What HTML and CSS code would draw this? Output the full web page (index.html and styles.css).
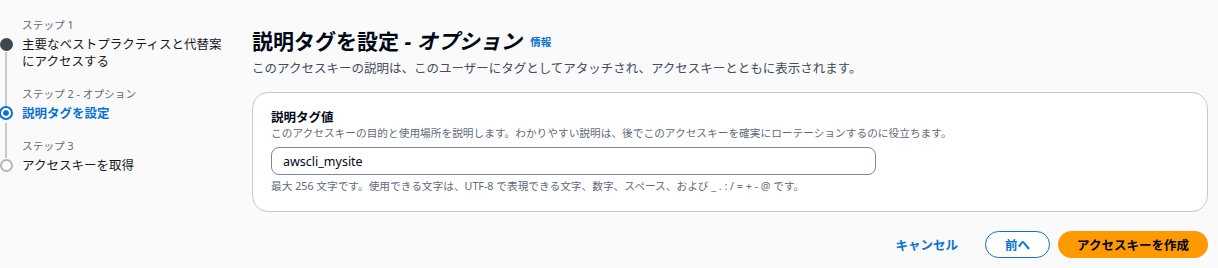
FILE: index.html
```html
<!DOCTYPE html>
<html lang="ja">
<head>
    <meta charset="UTF-8">
    <meta name="viewport" content="width=device-width, initial-scale=1.0">
    <title>説明タグを設定</title>
    <link rel="stylesheet" href="styles.css">
</head>
<body>
    <div class="wizard">
        <nav class="steps">
            <div class="step done">
                <div class="step-label">ステップ 1</div>
                <div class="step-title">主要なベストプラクティスと代替案にアクセスする</div>
            </div>
            <div class="step current">
                <div class="step-label">ステップ 2 - オプション</div>
                <div class="step-title">説明タグを設定</div>
            </div>
            <div class="step">
                <div class="step-label">ステップ 3</div>
                <div class="step-title">アクセスキーを取得</div>
            </div>
        </nav>

        <main class="content">
            <h1 class="page-title">説明タグを設定 <em>- オプション</em> <a href="#" class="info-link">情報</a></h1>
            <p class="page-desc">このアクセスキーの説明は、このユーザーにタグとしてアタッチされ、アクセスキーとともに表示されます。</p>

            <div class="card">
                <label class="field-label" for="tagValue">説明タグ値</label>
                <div class="field-desc">このアクセスキーの目的と使用場所を説明します。わかりやすい説明は、後でこのアクセスキーを確実にローテーションするのに役立ちます。</div>
                <input type="text" id="tagValue" class="field-input" value="awscli_mysite">
                <div class="field-hint">最大 256 文字です。使用できる文字は、UTF-8 で表現できる文字、数字、スペース、および _ . : / = + - @ です。</div>
            </div>

            <div class="actions">
                <button class="btn btn-link">キャンセル</button>
                <button class="btn btn-normal">前へ</button>
                <button class="btn btn-primary">アクセスキーを作成</button>
            </div>
        </main>
    </div>
</body>
</html>
```

FILE: styles.css
```css
body {
    margin: 0;
    background-color: #fafafa;
    color: #000716;
    font-family: "Noto Sans", "Noto Sans CJK JP", sans-serif;
    font-size: 12.5px;
}
.wizard {
    display: flex;
}
.steps {
    width: 252px;
    flex-shrink: 0;
    padding-top: 17px;
}
.step {
    position: relative;
    padding-left: 22px;
    padding-right: 20px;
    margin-bottom: 16px;
}
.step::before {
    content: "";
    position: absolute;
    left: 0;
    top: 21px;
    width: 9px;
    height: 9px;
    border: 2px solid #b4b4bb;
    border-radius: 50%;
    background-color: #fff;
}
.step:not(:last-child)::after {
    content: "";
    position: absolute;
    left: 5px;
    top: 35px;
    bottom: -36px;
    width: 2px;
    background-color: #c6c6cd;
}
.step.done::before {
    width: 13px;
    height: 13px;
    border: none;
    background-color: #414750;
}
.step.current::before {
    left: -1px;
    top: 20px;
    width: 6px;
    height: 6px;
    border: 2px solid #0972d3;
    background-color: #0972d3;
    box-shadow: inset 0 0 0 2px #fff;
    padding: 2px;
    background-clip: content-box;
}
.step.current::after {
    top: 37px;
}
.step-label {
    font-size: 10.7px;
    line-height: 16px;
    color: #5f6b7a;
}
.step-title {
    margin-top: 3px;
    line-height: 17px;
    color: #16191f;
}
.step.current .step-title {
    color: #0972d3;
    font-weight: bold;
}
.content {
    flex: 1;
    padding: 28px 10px 0 0;
}
.page-title {
    margin: 0;
    font-size: 21px;
    line-height: 26px;
    font-weight: bold;
}
.page-title em {
    font-style: italic;
}
.info-link {
    margin-left: 3px;
    font-size: 10.5px;
    color: #0972d3;
    text-decoration: none;
    vertical-align: 3px;
}
.page-desc {
    margin: 5px 0 0;
    line-height: 17px;
    color: #414d5c;
}
.card {
    margin-top: 15px;
    padding: 16px 18px 17px;
    background-color: #fff;
    border: 1px solid #c6c6cd;
    border-radius: 16px;
}
.field-label {
    display: block;
    font-weight: bold;
    line-height: 17px;
}
.field-desc,
.field-hint {
    font-size: 10.7px;
    line-height: 15px;
    color: #5f6b7a;
}
.field-input {
    display: block;
    box-sizing: border-box;
    width: 605px;
    height: 28px;
    margin: 6px 0 4px;
    padding: 0 11px;
    border: 1px solid #7d8998;
    border-radius: 8px;
    font-family: inherit;
    font-size: 12.5px;
    color: #000716;
    background-color: #fff;
}
.actions {
    display: flex;
    justify-content: flex-end;
    gap: 8px;
    margin-top: 19px;
}
.btn {
    height: 27px;
    padding: 0 19px;
    border-radius: 20px;
    font-family: inherit;
    font-size: 12.5px;
    font-weight: bold;
    cursor: pointer;
}
.btn-link {
    border: none;
    background: none;
    color: #0972d3;
}
.btn-normal {
    border: 1.5px solid #0972d3;
    background-color: #fff;
    color: #0972d3;
}
.btn-primary {
    border: none;
    background-color: #ff9900;
    color: #000716;
}
```
